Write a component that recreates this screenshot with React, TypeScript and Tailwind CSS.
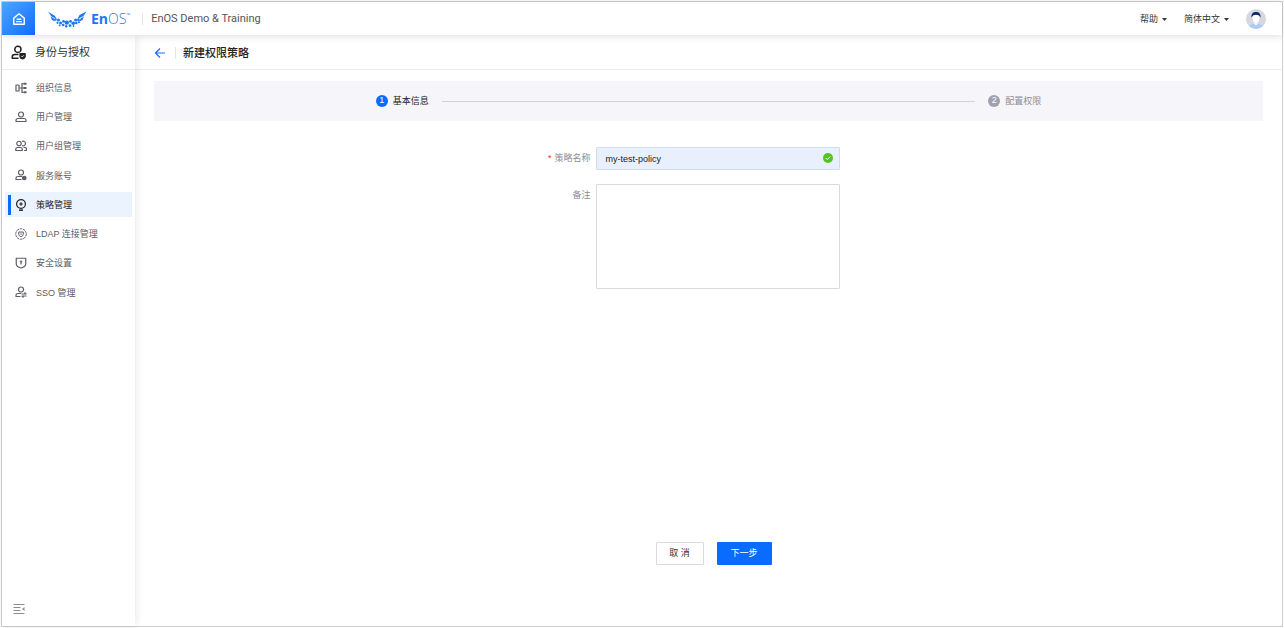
import type { ReactNode } from "react";

function Icon({ children, className = "size-3" }: { children: ReactNode; className?: string }) {
  return (
    <svg
      viewBox="0 0 24 24"
      fill="none"
      stroke="currentColor"
      strokeWidth="2.4"
      strokeLinejoin="round"
      className={`shrink-0 ${className}`}
      aria-hidden="true"
    >
      {children}
    </svg>
  );
}

const userBody = <path d="M2 21v-2c0-3 2-4 4-4h12c2 0 4 1 4 4v2z" />;

const items: { label: string; icon: ReactNode; active?: boolean }[] = [
  {
    label: "组织信息",
    icon: (
      <>
        <rect x="2" y="6" width="6" height="12" />
        <path d="M8 12h14M14 2v20M13 3h4M13 21h4" />
        <path d="M17 3.500h6M17 20.500h6M17 12h6" strokeWidth="3.600" />
      </>
    ),
  },
  {
    label: "用户管理",
    icon: (
      <>
        <circle cx="12" cy="7" r="5" />
        {userBody}
      </>
    ),
  },
  {
    label: "用户组管理",
    icon: (
      <>
        <circle cx="8" cy="7" r="4.500" />
        <path d="M1.500 21v-2c0-3 2-4 4-4h5c2 0 4 1 4 4v2z" />
        <path d="M14 3c3-1.500 7 0 7 4s-4 5.500-7 4M17 15h2c2 0 4 1 4 3v3h-5" />
      </>
    ),
  },
  {
    label: "服务账号",
    icon: (
      <>
        <circle cx="12" cy="7" r="5" />
        <path d="M13 21H2v-2c0-3 2-4 4-4h8" />
        <circle cx="18.500" cy="18" r="3.500" fill="currentColor" />
      </>
    ),
  },
  {
    label: "策略管理",
    active: true,
    icon: (
      <>
        <circle cx="12" cy="10" r="8.800" />
        <path d="M12 6.500v7M8.500 10h7" />
        <path d="M8 22.300h8" strokeWidth="3" />
      </>
    ),
  },
  {
    label: "LDAP 连接管理",
    icon: (
      <>
        <circle cx="12" cy="12" r="10.500" strokeWidth="2" strokeDasharray="5 1.500" />
        <path d="M7.500 8h9v4.500c0 2.500-2 4-4.500 5-2.500-1-4.500-2.500-4.500-5z" strokeWidth="2" />
        <path d="M12 10.500v3" strokeWidth="2" />
      </>
    ),
  },
  {
    label: "安全设置",
    icon: (
      <>
        <path d="M2.500 2.500h19v11c0 4-4 7-9.500 8.500-5.500-1.500-9.500-4.500-9.500-8.500z" />
        <path d="M12 7v8M9.500 9.500h5" />
      </>
    ),
  },
  {
    label: "SSO 管理",
    icon: (
      <>
        <circle cx="12" cy="7" r="5" />
        <path d="M11 21H2v-2c0-3 2-4 4-4h6M13 16h9l-3-3M23 20h-9l3 3" />
      </>
    ),
  },
];

const logoDots: [number, number, number][] = [
  [8.500, 9.500, 1.300], [11.500, 10, 1.500], [10.500, 12.800, 1.100], [13.600, 13, 1.500], [12.600, 15.400, 0.9],
  [16.500, 11.400, 1.400], [16.200, 15, 1.300], [19.800, 12.600, 2.200], [19.200, 16.300, 1.200],
  [23.500, 11.400, 1.400], [23, 15.600, 1.400], [26.300, 13.300, 1.800], [26.500, 16, 0.9],
  [29.300, 13, 1.300], [28.600, 10, 1.500], [31.500, 10, 1.400], [32, 12.300, 1],
];

function Caret() {
  return (
    <svg viewBox="0 0 10 6" className="h-[3px] w-[5px]" fill="currentColor" aria-hidden="true">
      <path d="M0 0h10L5 6z" />
    </svg>
  );
}

function Header() {
  return (
    <header className="relative z-20 flex h-[33px] items-center bg-white shadow-[0_1px_8px_rgba(0,0,0,0.14)]">
      <a
        href="#home"
        aria-label="首页"
        className="flex size-[33px] items-center justify-center bg-linear-to-br from-[#4fa3ff] to-[#0a6cff] text-white"
      >
        <Icon className="size-[14px]">
          <path d="M3 10.500 12 3l9 7.500V21H3z" />
          <path d="M7 16.500h10M8 12.500h8" />
        </Icon>
      </a>
      <a href="#enos" className="ml-3 flex items-center pt-px text-[#1a78f5]">
        <svg viewBox="0 0 40 18" className="h-[18px] w-10" fill="currentColor" aria-hidden="true">
          <path d="M1 1.500 8 6 9.500 8.800 4.500 6.500z" />
          <path d="M39.500 1.500 32.500 5 30.500 9 36.500 6z" />
          <path d="M3.500 6.500 7 8.500 8 11.500 5 10zM37 6.500 33.500 8.500 32.500 11.500 35.500 10z" />
          {logoDots.map(([x, y, r]) => (
            <circle key={`${x}-${y}`} cx={x} cy={y} r={r} />
          ))}
        </svg>
        <span className="ml-1 flex font-['Open_Sans',sans-serif] text-sm leading-4">
          <span className="font-bold">En</span>
          <span className="font-light">OS</span>
          <span className="text-[5px] leading-[9px]">™</span>
        </span>
      </a>
      <div className="ml-3 h-3 w-px bg-[#e4e4e8]" />
      <span className="ml-2 pt-0.5 font-['Roboto',sans-serif] text-[11px] text-[#555]">EnOS Demo &amp; Training</span>
      <div className="ml-auto flex items-center pr-4 text-[9px] text-[#333]">
        <button type="button" className="flex items-center gap-1 pt-0.5">
          帮助 <Caret />
        </button>
        <button type="button" className="ml-[17px] flex items-center gap-1 pt-0.5">
          简体中文 <Caret />
        </button>
        <button type="button" aria-label="用户" className="ml-[17px]">
          <svg viewBox="0 0 40 40" className="size-5" aria-hidden="true">
            <clipPath id="avatar">
              <circle cx="20" cy="20" r="20" />
            </clipPath>
            <g clipPath="url(#avatar)">
              <path fill="#d6d7e0" d="M0 0h40v40H0z" />
              <path fill="#a9cbff" d="M4 40c0-8 5-10 16-10s16 2 16 10z" />
              <path fill="#fff" d="M13 12h14v7c0 4-2 6-4 8v3l-3 3-3-3v-3c-2-2-4-4-4-8z" />
              <path fill="#0c2a66" d="M11 17c-1-7 3-11 9-11s10 4 9 11l-3-4c-4-2-8-2-12 0z" />
            </g>
          </svg>
        </button>
      </div>
    </header>
  );
}

function Sidebar() {
  return (
    <aside className="relative z-10 flex w-[133px] shrink-0 flex-col bg-white shadow-[1px_0_8px_rgba(0,0,0,0.1)]">
      <div className="flex h-[35px] items-center gap-[9px] border-b border-[#ececf0] pl-[9px] text-[11px] text-[#333]">
        <Icon className="size-[15px] text-[#222]">
          <circle cx="11" cy="7" r="5" />
          <path d="M12 21H2v-2c0-3 2-4 4-4h6" />
          <path d="M14.500 14h8v4c0 2-2 3.500-4 4-2-.5-4-2-4-4z" fill="currentColor" />
          <path d="m16.500 17.500 1.500 1.500 2.500-2.500" stroke="#fff" strokeWidth="1.500" />
        </Icon>
        <span className="pt-px">身份与授权</span>
      </div>
      <nav className="mt-[5px] flex h-[230px] flex-col justify-between px-[3px]">
        {items.map(({ label, icon, active }) => (
          <a
            key={label}
            href="#menu"
            aria-current={active ? "page" : undefined}
            className={`flex h-[25px] items-center pl-[3px] text-[9px] ${active ? "bg-[#ebf3ff] text-[#222]" : "text-[#5c5c66]"}`}
          >
            <span className={`h-5 w-[3px] ${active ? "bg-[#0a6cff]" : ""}`} />
            <span className="ml-1 mr-[9px] flex">
              <Icon>{icon}</Icon>
            </span>
            <span className="pt-0.5">{label}</span>
          </a>
        ))}
      </nav>
      <button type="button" aria-label="收起菜单" className="mb-[11px] ml-[11px] mt-auto w-3 text-[#8c8c98]">
        <Icon>
          <path d="M1 3h22M1 9h14M1 15h14M1 21h22" />
          <path d="m23 8-5 4 5 4z" fill="currentColor" stroke="none" />
        </Icon>
      </button>
    </aside>
  );
}

function Steps() {
  return (
    <div className="flex h-10 items-center justify-center bg-[#f5f5fa]">
      <ol className="flex w-3/5 items-center text-[9px]">
        <li className="flex items-center gap-[5px] text-[#222]">
          <span className="flex size-3 items-center justify-center rounded-full bg-[#0a6cff] text-[9px] text-white">1</span>
          <span className="pt-px">基本信息</span>
        </li>
        <li aria-hidden="true" className="mx-[13px] h-px flex-1 bg-[#d2d2dc]" />
        <li className="flex items-center gap-[5px] text-[#8c8c98]">
          <span className="flex size-3 items-center justify-center rounded-full bg-[#a0a0ae] text-[9px] text-white">2</span>
          <span className="pt-px">配置权限</span>
        </li>
      </ol>
    </div>
  );
}

export default function App() {
  return (
    <div className="flex min-h-screen flex-col bg-white p-px font-['Liberation_Sans','Noto_Sans_CJK_SC',sans-serif]">
      <div className="flex flex-1 flex-col border border-[#cfcfcf]">
        <Header />
        <div className="flex flex-1">
          <Sidebar />
          <main className="flex min-w-0 flex-1 flex-col">
            <div className="flex h-[35px] items-center border-b border-[#ececf0] pl-[19px] pt-0.5">
              <a href="#back" aria-label="返回" className="text-[#1a6cff]">
                <Icon className="size-3">
                  <path d="M22 12H3M12 3l-9 9 9 9" />
                </Icon>
              </a>
              <div className="ml-[9px] h-3 w-px bg-[#e4e4e8]" />
              <h1 className="ml-[7px] pt-px text-[11px] font-medium text-[#222]">新建权限策略</h1>
            </div>
            <form className="flex flex-1 flex-col px-[19px] pb-[61px] pt-[11px] text-[9px]">
              <Steps />
              <div className="mt-[26px] grid grid-cols-[39.9%_22%] gap-y-[14px]">
                <label htmlFor="name" className="flex h-[23px] items-center justify-end pr-1.5 text-[#8c8c98]">
                  <span className="mr-[3px] text-[#f5222d]">*</span>
                  策略名称
                </label>
                <div className="relative">
                  <input
                    id="name"
                    defaultValue="my-test-policy"
                    className="block h-[23px] w-full rounded-[1px] border border-[#d5dbe8] bg-[#e8f0fe] px-2 text-[#222] outline-none"
                  />
                  <svg viewBox="0 0 20 20" className="absolute right-[7px] top-[6px] size-[10px]" aria-hidden="true">
                    <circle cx="10" cy="10" r="10" fill="#52c41a" />
                    <path d="m5.500 10 3 3 6-6" fill="none" stroke="#fff" strokeWidth="2" />
                  </svg>
                </div>
                <label htmlFor="note" className="flex h-[23px] items-center justify-end pr-1.5 text-[#8c8c98]">
                  备注
                </label>
                <textarea
                  id="note"
                  className="block h-[105px] w-full resize-none rounded-[1px] border border-[#d9d9e3] px-2 py-1 text-[#222] outline-none"
                />
              </div>
              <div className="mt-auto flex justify-center gap-[13px] pl-[10px]">
                <button type="button" className="h-[23px] w-12 rounded-[1px] border border-[#d9d9e3] bg-white text-[#333]">
                  取 消
                </button>
                <button type="submit" className="h-[23px] w-[55px] rounded-[1px] bg-[#0a6cff] text-white">
                  下一步
                </button>
              </div>
            </form>
          </main>
        </div>
      </div>
    </div>
  );
}
